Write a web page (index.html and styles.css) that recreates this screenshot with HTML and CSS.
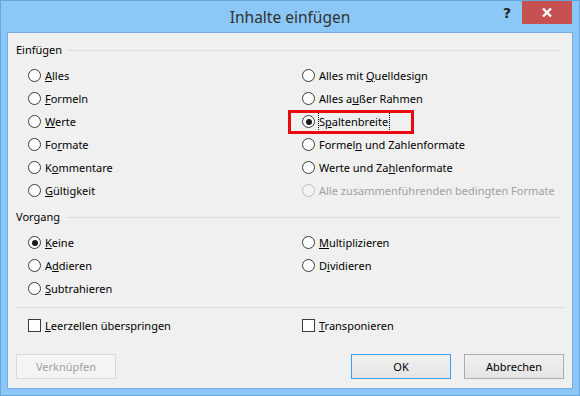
FILE: index.html
```html
<!DOCTYPE html>
<html lang="de">
<head>
<meta charset="utf-8">
<title>Inhalte einfügen</title>
<link rel="stylesheet" href="styles.css">
</head>
<body>
<div class="window">
  <div class="titlebar">
    <div class="tb-side"></div>
    <div class="title">Inhalte einfügen</div>
    <div class="tb-side tb-controls">
      <span class="help">?</span>
      <span class="close"><svg width="10" height="9" viewBox="0 0 10 9"><path d="M1 0.5 L9 8.5 M9 0.5 L1 8.5" stroke="#fff" stroke-width="2.4"/></svg></span>
    </div>
  </div>
  <div class="client">
    <div class="group-head"><span>Einfügen</span><i class="line"></i></div>
    <div class="grid">
      <label class="opt"><span class="radio"></span><span class="lbl"><u>A</u>lles</span></label>
      <label class="opt"><span class="radio"></span><span class="lbl">Alles mit <u>Q</u>uelldesign</span></label>
      <label class="opt"><span class="radio"></span><span class="lbl"><u>F</u>ormeln</span></label>
      <label class="opt"><span class="radio"></span><span class="lbl">Alles a<u>u</u>ßer Rahmen</span></label>
      <label class="opt"><span class="radio"></span><span class="lbl"><u>W</u>erte</span></label>
      <label class="opt marked"><span class="radio on"></span><span class="lbl focus">S<u>p</u>altenbreite</span><span class="mark"></span></label>
      <label class="opt"><span class="radio"></span><span class="lbl">Fo<u>r</u>mate</span></label>
      <label class="opt"><span class="radio"></span><span class="lbl">Formel<u>n</u> und Zahlenformate</span></label>
      <label class="opt"><span class="radio"></span><span class="lbl">K<u>o</u>mmentare</span></label>
      <label class="opt"><span class="radio"></span><span class="lbl">Werte und Za<u>h</u>lenformate</span></label>
      <label class="opt"><span class="radio"></span><span class="lbl"><u>G</u>ültigkeit</span></label>
      <label class="opt disabled"><span class="radio"></span><span class="lbl">Alle zusammenführenden bedingten Formate</span></label>
    </div>
    <div class="group-head g2"><span>Vorgang</span><i class="line"></i></div>
    <div class="grid">
      <label class="opt"><span class="radio on"></span><span class="lbl"><u>K</u>eine</span></label>
      <label class="opt"><span class="radio"></span><span class="lbl"><u>M</u>ultiplizieren</span></label>
      <label class="opt"><span class="radio"></span><span class="lbl">A<u>d</u>dieren</span></label>
      <label class="opt"><span class="radio"></span><span class="lbl">D<u>i</u>vidieren</span></label>
      <label class="opt"><span class="radio"></span><span class="lbl"><u>S</u>ubtrahieren</span></label>
    </div>
    <div class="sep"></div>
    <div class="grid checks">
      <label class="opt"><span class="check"></span><span class="lbl"><u>L</u>eerzellen überspringen</span></label>
      <label class="opt"><span class="check"></span><span class="lbl"><u>T</u>ransponieren</span></label>
    </div>
    <div class="buttons">
      <button class="btn" disabled>Verknüpfen</button>
      <span class="spacer"></span>
      <button class="btn default">OK</button>
      <button class="btn">Abbrechen</button>
    </div>
  </div>
</div>
</body>
</html>
```
FILE: styles.css
```css
* { box-sizing: border-box; }
html, body { margin: 0; padding: 0; }
body {
  width: 580px;
  height: 396px;
  overflow: hidden;
  font-family: "Noto Sans", "Open Sans", sans-serif;
  font-size: 11px;
  color: #000;
}
.window {
  width: 580px;
  height: 396px;
  border: 1px solid #6aa6dd;
  background: #8cc8f7;
  display: flex;
  flex-direction: column;
  padding: 0 6px 6px 6px;
}
.titlebar {
  height: 31px;
  display: grid;
  grid-template-columns: 1fr auto 1fr;
  align-items: start;
}
.title {
  font-size: 15.5px;
  color: #333;
  line-height: 33px;
}
.tb-controls {
  display: flex;
  justify-content: flex-end;
  align-items: flex-start;
}
.help {
  font-family: "DejaVu Sans", sans-serif;
  font-weight: bold;
  font-size: 14px;
  color: #222;
  line-height: 14px;
  margin-top: 5px;
  margin-right: 11px;
}
.close {
  width: 50px;
  height: 23px;
  background: #c75050;
  display: flex;
  align-items: center;
  justify-content: center;
  margin-right: 1px;
}
.close svg { display: block; }
.client {
  flex: 1;
  background: #f0f0f0;
  border: 1px solid #79acdd;
  padding: 7px 8px 0 8px;
  display: flex;
  flex-direction: column;
}
.group-head {
  height: 20px;
  display: flex;
  align-items: center;
  margin-right: 3px;
}
.group-head span { line-height: 20px; }
.group-head .line {
  flex: 1;
  height: 1px;
  background: #dcdcdc;
  margin-left: 6px;
}
.g2 { margin-top: 5px; }
.grid {
  display: grid;
  grid-template-columns: 274px 1fr;
  padding-left: 12px;
  margin-top: 4px;
}
.opt {
  height: 23px;
  display: flex;
  align-items: center;
  position: relative;
}
.radio {
  width: 13px;
  height: 13px;
  border: 1px solid #3a3a3a;
  border-radius: 50%;
  background: #fff;
  margin-right: 4px;
  display: flex;
  align-items: center;
  justify-content: center;
  flex: none;
}
.radio.on::after {
  content: "";
  width: 6px;
  height: 6px;
  border-radius: 50%;
  background: #1a1a1a;
}
.check {
  width: 13px;
  height: 13px;
  border: 1px solid #3a3a3a;
  background: #fff;
  margin-right: 4px;
  flex: none;
}
.lbl { line-height: 17px; white-space: nowrap; }
.lbl.focus { outline: 1px dotted #000; outline-offset: 0; padding: 0 1px 1px 0; }
.disabled .lbl { color: #a0a0a0; }
.disabled .radio { border-color: #bcbcbc; background: #f4f4f4; }
.mark {
  position: absolute;
  left: -14px;
  top: 0;
  width: 126px;
  height: 24px;
  border: 3px solid #e8080f;
}
.sep {
  height: 1px;
  background: #dcdcdc;
  margin-top: 7px;
}
.checks { margin-top: 6px; }
.buttons {
  display: flex;
  margin-top: 17px;
}
.spacer { flex: 1; }
.btn {
  width: 100px;
  height: 25px;
  font-family: inherit;
  font-size: 11px;
  color: #000;
  border: 1px solid #acacac;
  background: linear-gradient(#f0f0f0, #e5e5e5);
  padding: 0;
  margin: 0;
}
.btn.default { border-color: #3c9df5; margin-right: 13px; }
.btn:disabled { color: #a0a0a0; border-color: #d9d9d9; background: #f4f4f4; }
```
